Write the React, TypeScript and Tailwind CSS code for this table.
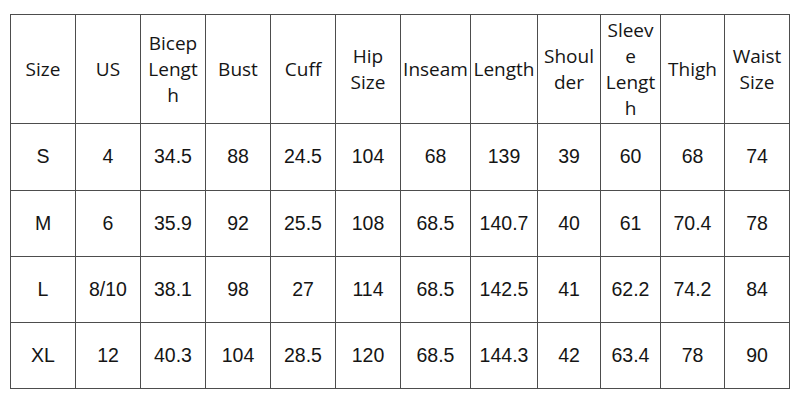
const cols = [65, 65, 65, 65, 65, 65, 70, 67, 63, 60, 64, 65];

const headers: string[][] = [
  ['Size'],
  ['US'],
  ['Bicep', 'Lengt', 'h'],
  ['Bust'],
  ['Cuff'],
  ['Hip', 'Size'],
  ['Inseam'],
  ['Length'],
  ['Shoul', 'der'],
  ['Sleev', 'e', 'Lengt', 'h'],
  ['Thigh'],
  ['Waist', 'Size'],
];

const rows: string[][] = [
  ['S', '4', '34.5', '88', '24.5', '104', '68', '139', '39', '60', '68', '74'],
  ['M', '6', '35.9', '92', '25.5', '108', '68.5', '140.7', '40', '61', '70.4', '78'],
  ['L', '8/10', '38.1', '98', '27', '114', '68.5', '142.5', '41', '62.2', '74.2', '84'],
  ['XL', '12', '40.3', '104', '28.5', '120', '68.5', '144.3', '42', '63.4', '78', '90'],
];

export default function App() {
  return (
    <div className="w-[800px] h-[400px] bg-white pt-[14px] pl-[10px]">
      <table className="border-collapse table-fixed w-[779px] text-[#151515]">
        <colgroup>
          {cols.map((w, i) => (
            <col key={i} style={{ width: w }} />
          ))}
        </colgroup>
        <thead>
          <tr className="h-[109px]">
            {headers.map((lines, i) => (
              <th
                key={i}
                className="border border-[#4d4d4d] p-0 font-normal text-[19px] leading-[26px] text-center align-middle font-['Open_Sans',sans-serif]"
              >
                {lines.map((l, j) => (
                  <div key={j}>{l}</div>
                ))}
              </th>
            ))}
          </tr>
        </thead>
        <tbody>
          {rows.map((r, i) => (
            <tr key={i} className={i === 0 ? 'h-[67px]' : 'h-[66px]'}>
              {r.map((v, j) => (
                <td
                  key={j}
                  className="border border-[#4d4d4d] p-0 text-[19.5px] text-center align-middle font-['Liberation_Sans',Arial,sans-serif]"
                >
                  {v}
                </td>
              ))}
            </tr>
          ))}
        </tbody>
      </table>
    </div>
  );
}
